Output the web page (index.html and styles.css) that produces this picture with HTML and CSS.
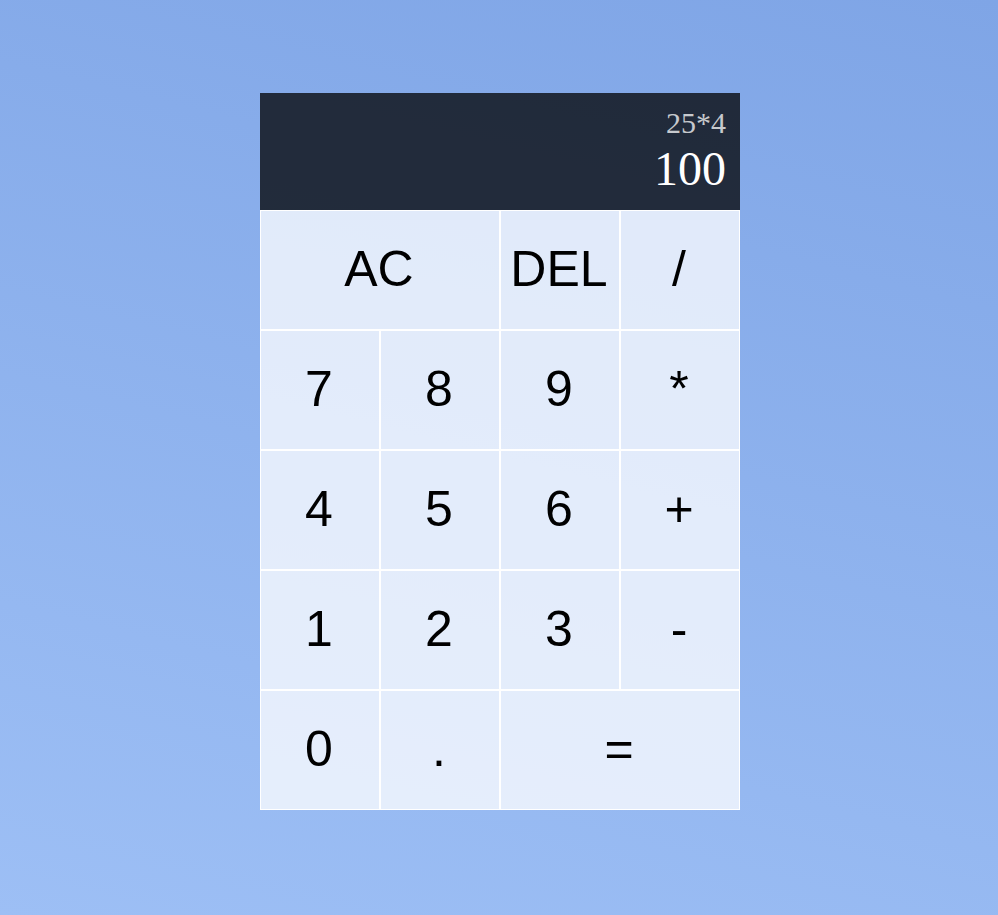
FILE: index.html
```html
<!DOCTYPE html>
<html lang="en">
<head>
<meta charset="utf-8">
<title>Calculator</title>
<link rel="stylesheet" href="styles.css">
</head>
<body>
<div class="calculator-grid">
  <div class="output">
    <div class="previous-operand">25*4</div>
    <div class="current-operand">100</div>
  </div>
  <button class="span-two">AC</button>
  <button>DEL</button>
  <button>/</button>
  <button>7</button>
  <button>8</button>
  <button>9</button>
  <button>*</button>
  <button>4</button>
  <button>5</button>
  <button>6</button>
  <button>+</button>
  <button>1</button>
  <button>2</button>
  <button>3</button>
  <button>-</button>
  <button>0</button>
  <button>.</button>
  <button class="span-two">=</button>
</div>
</body>
</html>
```
FILE: styles.css
```css
*, *::before, *::after {
  box-sizing: border-box;
}

html, body {
  margin: 0;
  padding: 0;
}

body {
  min-height: 100vh;
  background: linear-gradient(14deg, #9dbff5, #7fa5e6);
  font-family: "Liberation Sans", Arial, sans-serif;
}

.calculator-grid {
  display: grid;
  justify-content: center;
  align-content: start;
  min-height: 100vh;
  padding: 93px 0 0 2px;
  grid-template-columns: repeat(4, 120px);
  grid-template-rows: 117px repeat(5, 120px);
}

.calculator-grid > button {
  cursor: pointer;
  font-family: "Liberation Sans", Arial, sans-serif;
  font-size: 50px;
  color: #000;
  border: 1px solid #fff;
  outline: none;
  padding: 0 2px 2px 0;
  margin: 0;
  background-color: rgba(255, 255, 255, 0.75);
}

.span-two {
  grid-column: span 2;
}

.output {
  grid-column: 1 / -1;
  background-color: rgba(0, 0, 0, 0.75);
  display: flex;
  flex-direction: column;
  align-items: flex-end;
  justify-content: space-between;
  padding: 13px 14px 14px;
  font-family: "Liberation Serif", "Times New Roman", serif;
  word-wrap: break-word;
  word-break: break-all;
}

.previous-operand {
  color: rgba(255, 255, 255, 0.75);
  font-size: 30px;
}

.current-operand {
  color: #fff;
  font-size: 48px;
}
```
